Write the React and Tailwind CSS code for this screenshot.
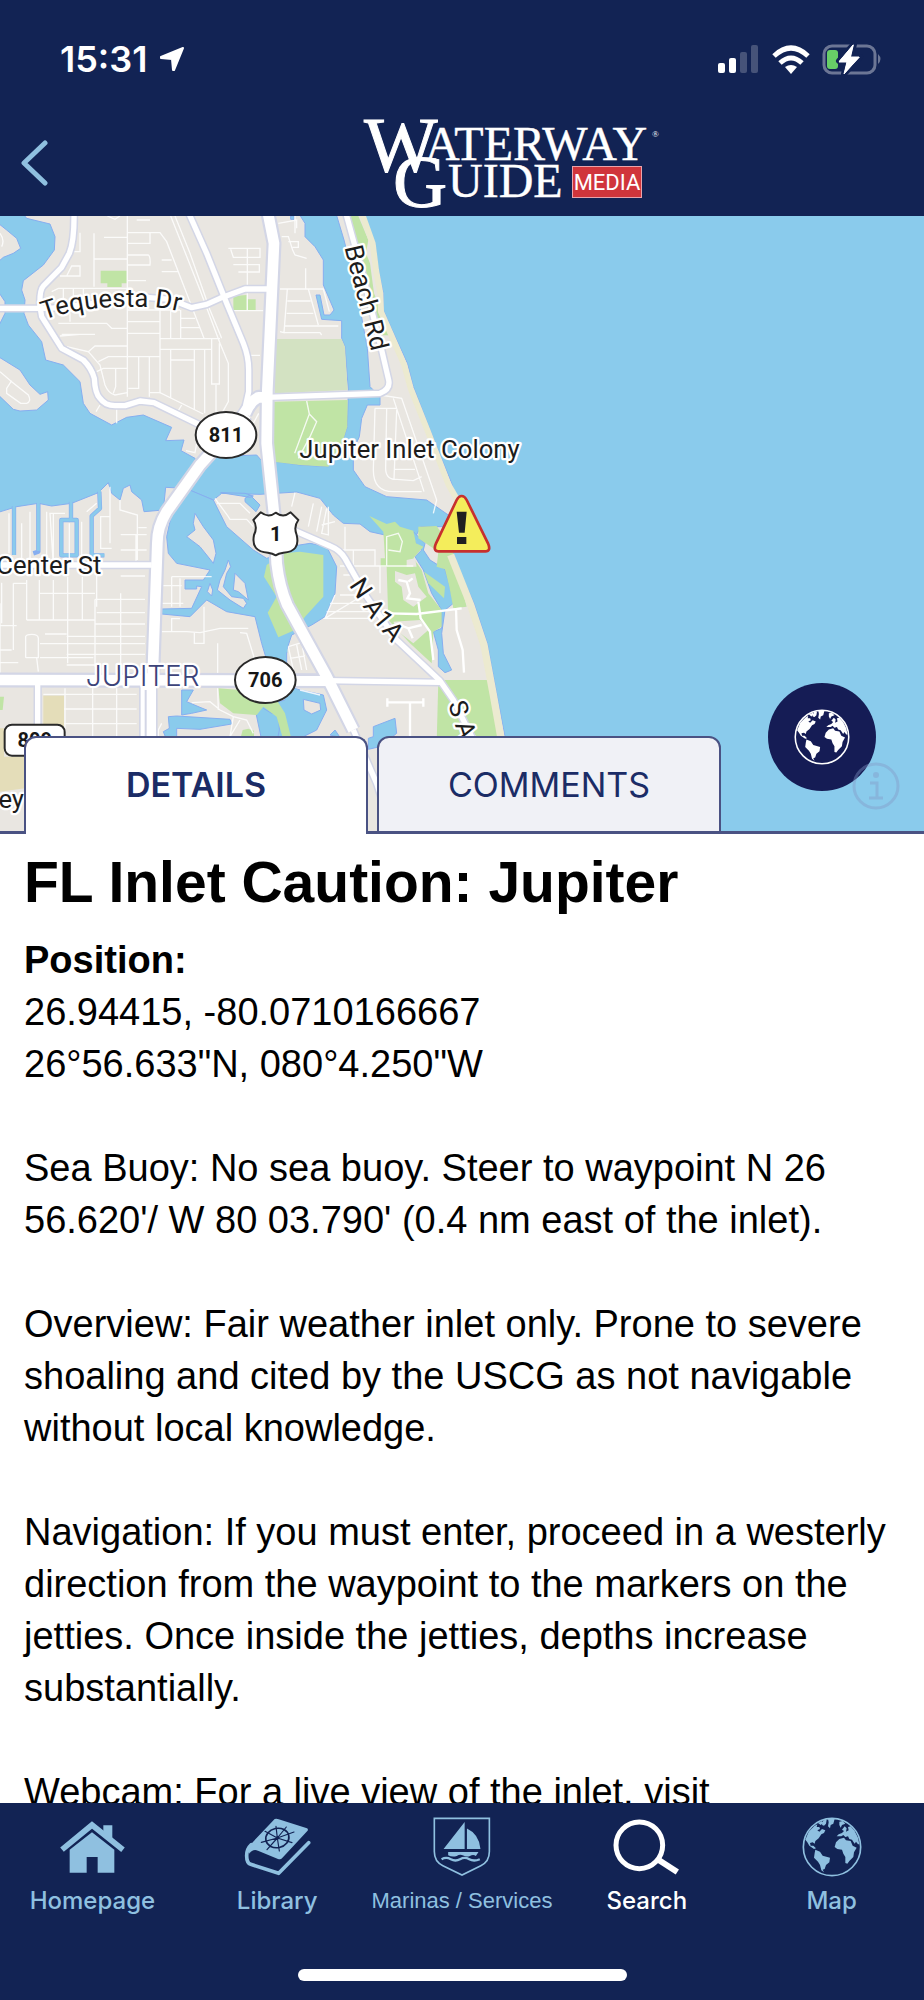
import { useState } from "react";

const roads = {
    us1: "M802 0 L822 100 L802 540 L800 700 L824 930 L830 1060 Q838 1130 862 1185 L980 1400 L1060 1560",
    us1South: "M1060 1560 L1130 1720 L1180 1872",
    r811: "M562 0 L620 130 L680 280 L730 400 Q746 440 746 480 L746 545 L736 590 L690 660",
    r811South: "M740 612 L690 665 L600 765 L500 905 Q472 950 472 1000 L458 1400",
    r811Link: "M800 562 H775 Q750 575 735 612",
    tequesta: "M222 0 Q224 90 208 130 L185 172 L130 228 Q118 240 120 290 L125 320 L185 415 L250 450 Q275 475 283 505 Q285 550 300 565 Q315 587 345 587 L375 587 L420 573 L462 578 L600 645",
    tequestaDr: "M0 295 L150 295 L440 262 L510 268 L575 293 L620 283 L660 265 L735 237 L805 237",
    beach: "M800 562 L1140 550 Q1172 538 1166 510 L1145 420 L1090 200 L1035 0",
    center: "M0 1065 L455 1065",
    indiantown: "M0 1410 L980 1412",
    indiantownEast: "M980 1412 L1320 1417",
    a1a: "M880 960 L990 1008 Q1020 1020 1035 1045 L1100 1160 L1190 1290 L1320 1412 L1360 1470 L1425 1600",
    maplewood: "M113 1410 L113 1872",
};

// thin residential streets
const streets = [
    // north side
    "M382 18 V560 M282 70 V230 M282 147 H382 M382 68 H480 L500 95 L612 385 M382 100 H450 V68 M382 135 H445 Q452 140 450 165 H382",
    "M512 18 L600 240 L660 400 L685 460 V575 L660 620 M525 18 L570 130 L630 300 L665 385 M382 212 H438 M485 185 H535 M485 150 H515 M312 82 H382 M410 30 H450",
    "M240 68 V125 H215 M180 198 H240 V168 H215 L200 198 M155 245 L175 235 H382 M190 235 V290 M220 235 V290 M250 235 V290 M210 310 V335",
    "M382 300 H540 M480 300 V550 M512 300 V385 M542 300 V385 M542 325 H585 M542 353 H600 M480 386 H660 M480 418 H635 M382 335 H480 M382 370 H480",
    "M175 340 H320 L335 355 H382 M185 373 H285 M180 378 L240 373 M382 408 H285 L265 425 L200 410 M295 455 L325 440 H480 M382 475 H310 L290 485",
    "M265 425 L300 465 L315 525 Q325 550 345 555 L382 548 M347 475 V530 L340 550 M416 440 V535 H385 M448 440 V560 M448 548 H480 L610 612 M512 418 V565 M512 450 H583",
    "M583 418 V600 M614 418 V610 M635 386 V522 H658 V400 M648 525 V620 M545 585 L530 610 M350 587 V640 M300 585 L288 605 M322 18 L345 28 L360 18",
    "M685 115 H780 V142 H700 L692 118 M700 164 H778 V186 H715 M742 115 V300 M690 302 H790 M752 436 H780 M776 610 L760 640 M558 722 L585 728 L590 700",
    "M840 237 H970 L988 305 M862 237 L852 368 L840 365 M852 348 H1015 M860 310 H940 M862 273 H932 M925 237 L955 345 M917 175 V235 M852 368 H960 L965 375",
    "M845 80 H865 L878 120 L885 135 L920 145 M865 95 H895 V112 L878 112 M835 40 L890 30 V55 M885 18 V70",
    "M0 485 L35 515 L85 555 Q95 575 80 580 H62 L20 550 V535 L35 512 M0 70 Q15 90 5 110",
    "M920 573 L928 612 L884 730 M928 612 L950 635 L930 680 L895 745",
    // Jupiter Inlet Colony
    "M1140 555 L1205 565 L1310 870 L1300 910 M1180 565 L1272 845 M1125 595 H1190 M1125 595 L1120 780 Q1120 845 1180 845 H1265 M1160 595 L1157 770 Q1155 810 1190 808 L1240 812 L1265 800 M1190 600 L1182 808 M1182 778 H1245",
    // canals district
    "M27 910 V1030 M65 940 V1060 M90 905 V1060 M140 905 V1065 M160 912 V1065 L150 910 H195 M245 935 V1060 M330 830 V1000 M300 920 H330 M302 920 V1015 H335 M260 905 L290 880 M208 940 V1060",
    "M360 870 V900 L412 915 V1050 M440 953 H415 M362 974 H440 M362 1020 H440 M408 974 V1065",
    // west Jupiter grid
    "M5 1118 V1240 M40 1120 V1320 M80 1110 V1230 M118 1110 V1230 M160 1110 V1230 M203 1100 V1360 M247 1100 V1230 M290 1090 V1190 M285 1168 V1370 M362 1150 V1380 M0 1320 H35",
    "M120 1150 H285 M80 1230 H285 M0 1247 H50 M285 1168 H435 M290 1208 H435 M285 1242 H435 M200 1279 H435 M120 1301 H200 M200 1301 H435 M200 1333 H435 M120 1343 H280 M200 1365 H300 M362 1098 H435 M40 1120 H80",
    "M77 1343 V1280 Q78 1273 95 1273 Q115 1273 115 1285 V1343 H77 M110 1343 L115 1385 M135 1272 H200 M0 1358 H55 M485 1325 M0 1180 V1400 M130 1453 H410 M192 1497 H410 M192 1541 H410 M278 1435 V1590 M350 1435 V1590 M195 1435 V1590",
    "M485 1265 H560 L600 1268 L660 1255 H745 M515 1265 V1226 H540 M612 1190 V1265 V1300 H583 V1268 M720 1268 L740 1270 L760 1335 L770 1370 M653 1300 V1400 M485 1127 H545 M515 1100 H635 M515 1100 V1190 M485 1180 H550 M540 1105 V1190",
    "M485 1540 L475 1560 V1590 M575 1478 L630 1475 L660 1500 L700 1520 L740 1530 L760 1570 M653 1435 L655 1500 M700 1520 L690 1580 L720 1530",
    // east of US 1
    "M645 865 L685 920 L690 928 H740 L760 950 M650 880 H720 L750 910 M885 848 L875 890 M940 880 L925 950 M965 890 L950 965 M980 895 L965 970 L985 975 V890 M1005 935 L965 945",
    "M1035 950 V1020 M1025 1020 H1125 V1068 M1060 1020 V1068 M1020 1068 H1240 M1030 1095 H1060 M1140 1070 V1150 M1160 1070 V980 L1195 970 L1207 995 L1200 1025 L1165 1020",
    "M1020 1155 H1090 L975 1225 H1115 M990 1180 H1090 M980 1205 H1110 M1005 1155 L975 1225",
    "M865 1310 L880 1380 M865 1310 L905 1298 L920 1380 M870 1345 L915 1338 M890 1305 L905 1380 M900 1440 L960 1455",
];

const greens = [
    "M302 182 H380 V220 H365 V231 H322 V220 H302 Z",
    "M700 258 L740 255 V300 H700 Z M742 268 H767 V300 H742 Z",
    "M1042 18 H1075 L1105 90 L1098 130 L1110 160 L1122 250 L1142 300 L1170 376 L1148 376 L1080 150 Z",
    "M820 575 L1043 570 L1042 650 L1020 720 L985 770 L900 765 L820 755 Z",
    "M800 1065 L850 1030 L900 1025 L970 1035 V1160 L915 1220 L885 1260 L835 1282 L803 1208 L830 1160 L792 1100 Z",
    "M1108 918 L1160 942 L1185 935 L1200 950 L1240 962 L1248 1000 L1270 1010 L1240 1045 L1265 1080 L1285 1150 L1325 1200 V1250 L1300 1265 L1295 1360 L1230 1300 L1165 1230 L1160 1070 H1142 V1045 H1155 L1150 965 Z",
    "M1255 950 L1310 948 L1345 1000 L1360 1030 L1400 1190 L1360 1195 L1348 1130 L1335 1078 L1310 1070 L1315 1025 L1255 985 Z",
    "M1315 1410 H1465 L1500 1600 H1310 Z",
    "M655 1435 L720 1440 L830 1470 L855 1510 L875 1590 H850 L830 1520 L790 1490 L770 1515 L700 1510 L660 1480 Z",
    "M728 1560 L745 1556 L762 1562 V1590 H720 Z M0 1460 H12 L8 1500 H0 Z M0 1577 L12 1580 V1625 H0 Z",
];

function MapLabel({ children, ...rest }) {
    return (
        <text fontSize="77" fill="#1c1c1c" stroke="#fff" strokeWidth="14" strokeLinejoin="round" paintOrder="stroke" {...rest}>
            {children}
        </text>
    );
}

function MapView() {
    const minor = ["tequesta", "tequestaDr", "beach", "r811", "indiantownEast", "a1a", "center", "maplewood", "us1South"];
    const major = ["us1", "r811South", "r811Link", "indiantown"];
    return (
        <svg viewBox="0 18 2772 1854" className="block w-full h-auto" fontFamily="Roboto, sans-serif" role="img" aria-label="Map of Jupiter Inlet">
            <rect x="0" y="0" width="2772" height="1880" fill="#8acbec" />
            {/* land */}
            <g fill="#e9e6e1" stroke="#86aef0" strokeWidth="3">
                <path d="M60 0 L80 25 L150 42 L165 80 L163 120 L130 165 L70 212 L65 240 L75 270 L72 310 L85 345 L125 395 L137 450 L190 465 L240 515 L250 580 L270 610 L335 645 L380 622 L430 615 L515 652 L497 692 L552 690 L543 722 L585 745 L590 765 L640 740 L770 735 L785 752 L830 755 L900 765 L985 770 L1020 720 L1042 650 L1045 540 L1035 410 L1025 385 V332 L965 328 L948 255 L960 255 L972 315 H990 L1002 300 L970 225 V150 L945 110 L915 80 V40 L890 0 Z" />
                <path d="M-5 40 L20 60 L50 85 L62 115 L40 130 L10 142 L-5 155 Z M-5 245 L15 275 L15 310 L-5 350 Z M-5 440 L60 480 L90 525 L120 553 L143 545 L145 570 L110 600 L60 603 L40 598 L-5 555 Z" />
                <path d="M1005 0 L1032 90 L1070 240 L1102 415 L1110 530 L1140 560 V585 L1102 585 L1085 625 L1078 680 L1060 720 V780 L1095 830 L1160 860 L1280 870 L1345 915 L1385 925 L1355 820 L1290 660 L1240 530 L1222 460 L1172 350 L1150 300 V250 L1133 170 L1125 100 L1080 0 Z" />
                <path d="M-5 907 L50 890 L115 880 L155 888 L215 880 L295 848 L325 818 L335 850 L360 870 L370 835 L390 825 L395 845 L425 870 L432 905 L490 900 L497 832 L555 835 L640 870 L665 850 L780 853 L890 846 L960 865 L1000 915 L1030 940 L1080 942 L1110 965 L1155 975 L1230 962 L1242 990 L1262 950 L1340 950 L1360 1040 L1422 1180 L1462 1300 L1490 1450 L1515 1580 L1540 1880 H-5 Z" />
            </g>
            <g fill="#8acbec" stroke="#86aef0" strokeWidth="3">
                <path d="M550 832 L640 870 L680 950 L760 1020 L800 1045 L850 1030 L880 1008 L930 1000 L980 1010 L1010 1070 L1005 1150 L975 1220 L935 1245 L875 1275 L860 1320 V1400 L870 1430 L900 1440 L970 1455 L980 1500 L950 1560 L890 1590 H785 L768 1510 L790 1488 L855 1470 L850 1400 L800 1350 L785 1300 L765 1220 L680 1205 L620 1170 L570 1220 L485 1212 V1197 L575 1195 L605 1130 L590 1128 V1137 H555 V1110 L610 1110 L630 1080 L530 1060 L505 1030 L500 980 L512 925 L520 870 Z" />
                <path d="M1240 965 L1275 1000 L1270 1020 L1290 1050 L1335 1078 L1350 1130 L1360 1180 L1335 1200 L1325 1270 L1330 1330 L1355 1380 L1335 1388 L1315 1370 L1315 1320 L1300 1265 L1325 1255 V1200 L1295 1150 L1270 1080 L1245 1040 L1265 1020 L1240 990 Z" />
                <path d="M1120 1550 L1185 1525 L1190 1570 L1140 1610 L1105 1618 V1585 L1120 1580 Z M990 1575 L1005 1560 L1020 1582 Z M545 1440 H580 L560 1475 L600 1492 L620 1500 L575 1510 L545 1515 Z M505 1520 L530 1518 L690 1528 L695 1542 L600 1558 L530 1555 V1590 H500 L490 1565 L508 1555 Z M735 865 L750 855 L780 885 L768 905 L735 875 Z M872 18 H882 V28 H872 Z M57 1708 L75 1700 V1725 L57 1722 Z M1390 1490 L1410 1500 L1420 1545 L1395 1535 Z M662 848 L735 850 L760 858 L750 862 Z" />
                <path d="M838 1262 L870 1255 L880 1260 L862 1290 V1330 L838 1300 Z" stroke="none" />
            </g>
            {/* islets */}
            <g fill="#e9e6e1" stroke="#86aef0" strokeWidth="3">
                <path d="M585 910 L610 950 L640 990 L648 1030 L640 1060 L600 1010 L560 980 L585 960 L580 940 Z M685 1050 L692 1070 L680 1090 L670 1130 L695 1160 L730 1165 L740 1180 L730 1195 L690 1170 L652 1140 L660 1110 L675 1080 Z M705 1090 L735 1120 L745 1170 L715 1145 L700 1140 Z M630 1120 L638 1140 L635 1158 L622 1145 Z M910 1468 L960 1480 L962 1500 L935 1512 L912 1500 Z" />
                <path d="M790 1495 L815 1510 L836 1512 L838 1560 L832 1590" fill="none" />
            </g>
            {/* canals */}
            <g fill="none" stroke="#86aef0" strokeWidth="13" strokeLinejoin="round">
                <path d="M42 888 V1035 M115 880 V1025 L100 1030 M213 875 V930 M184 930 L184 1036 H230 V930 Z M298 845 L300 895 L275 918 V1036 H313" />
                <path d="M42 880 V1035 M115 875 V1022 M213 870 V930 M184 930 L184 1036 H230 V930 Z M298 840 L300 895 L275 918 V1036 H313" stroke="#8acbec" strokeWidth="9" />
            </g>
            <path d="M825 387 H1025 L1035 410 L1043 540 L825 550 Z" fill="#d3e2c2" />
            <g fill="#c0e4a5">
                {greens.map((d) => <path key={d} d={d} />)}
            </g>
            <path d="M1272 1085 L1335 1130 L1332 1165 L1285 1120 Z" fill="#c0e4a5" />
            <g fill="#e9e6e1">
                <path d="M1185 1083 L1220 1095 L1245 1090 L1255 1130 L1280 1160 L1240 1190 L1210 1170 L1205 1130 L1185 1115 Z M1180 1235 L1260 1230 L1285 1260 L1240 1300 L1195 1265 Z M1220 1050 L1245 1045 L1250 1070 H1220 Z" />
            </g>
            <path d="M130 1457 H192 V1590 H130 Z M0 1555 H12 V1640 H75 V1735 L0 1745 Z" fill="#e4ddb9" />
            {/* beach */}
            <path d="M1082 0 L1118 100 L1128 180 L1141 250 L1143 305 L1213 465 L1232 535 L1282 660 L1346 825 L1372 870" fill="none" stroke="#ecead0" strokeWidth="18" />
            <path d="M1352 1035 L1412 1185 L1452 1305 L1480 1455 L1504 1590" fill="none" stroke="#ecead0" strokeWidth="22" />
            <g fill="none" stroke="#fff" strokeWidth="4" opacity=".85">
                {streets.map((d) => <path key={d} d={d} />)}
            </g>
            <g fill="none" stroke="#fff" strokeWidth="7">
                <path d="M1160 1210 L1250 1212 L1385 1195 M1255 1175 L1262 1225 L1290 1265 L1300 1350 M1368 1195 L1370 1260 L1388 1320 L1392 1388 M1195 1110 L1220 1115 L1230 1150 L1222 1165 L1262 1170 M1225 1115 L1238 1105 M1200 1245 L1225 1255 L1265 1245 M1225 1255 L1238 1285 M1162 1477 H1270 M1162 1465 V1490 M1270 1465 V1490 M1230 1477 V1590" />
            </g>
            {/* roads: casing first, white on top */}
            <g fill="none" strokeLinejoin="round">
                {minor.map((k) => <path key={k} d={roads[k]} stroke="#d3d6e6" strokeWidth="25" />)}
                {major.map((k) => <path key={k} d={roads[k]} stroke="#d3d6e6" strokeWidth="45" />)}
                <path d="M445 1390 V1872" stroke="#d3d6e6" strokeWidth="56" />
                {minor.map((k) => <path key={k} d={roads[k]} stroke="#fff" strokeWidth="16" />)}
                {major.map((k) => <path key={k} d={roads[k]} stroke="#fff" strokeWidth="32" />)}
                <path d="M445 1390 V1872" stroke="#fff" strokeWidth="46" />
                <path d="M437 1440 V1872" stroke="#d3d6e6" strokeWidth="6" />
            </g>
            {/* labels */}
            <defs>
                <path id="tequesta-path" d="M132 330 C200 305 290 290 380 290 S500 292 580 315" />
                <path id="beach-path" d="M1034 112 C1050 190 1088 310 1122 460" />
                <path id="a1a-path" d="M1046 1126 L1105 1215 L1200 1330" />
                <path id="sa-path" d="M1344 1482 L1376 1580 L1400 1660" />
            </defs>
            <MapLabel><textPath href="#tequesta-path">Tequesta Dr</textPath></MapLabel>
            <MapLabel><textPath href="#beach-path">Beach Rd</textPath></MapLabel>
            <MapLabel><textPath href="#a1a-path">N A1A</textPath></MapLabel>
            <MapLabel><textPath href="#sa-path">S A1A</textPath></MapLabel>
            <MapLabel x="898" y="745">Jupiter Inlet Colony</MapLabel>
            <MapLabel x="304" y="1092" textAnchor="end">Center St</MapLabel>
            <MapLabel x="72" y="1795" textAnchor="end">ey</MapLabel>
            <MapLabel x="428" y="1429" textAnchor="middle" fontSize="84" fontWeight="300" fontFamily="Inter, sans-serif" fill="#3c4379">JUPITER</MapLabel>
            {/* route shields */}
            <g fill="#fff" stroke="#2a2a2a" strokeWidth="6">
                <ellipse cx="678" cy="675" rx="91" ry="69" />
                <ellipse cx="796" cy="1410" rx="91" ry="69" />
                <path d="M782 907 Q805 925 827 908 Q850 925 872 907 L895 930 Q880 950 890 975 Q902 1025 850 1028 Q835 1030 827 1036 Q818 1030 804 1028 Q752 1025 762 975 Q774 950 760 930 Z" strokeLinejoin="round" />
                <rect x="14" y="1544" width="180" height="93" rx="22" />
            </g>
            <g fill="#161616" fontWeight="700" fontSize="60" textAnchor="middle">
                <text x="678" y="696">811</text>
                <text x="796" y="1431">706</text>
                <text x="827" y="993">1</text>
                <text x="104" y="1611">809</text>
            </g>
            {/* inlet caution marker */}
            <path d="M1385 858 Q1394 858 1400 870 L1464 1000 Q1474 1024 1456 1024 H1316 Q1298 1024 1308 1000 L1370 870 Q1376 858 1385 858 Z" fill="#f4ed5b" stroke="#c7302e" strokeWidth="8" />
            <path d="M1370 905 H1400 L1394 968 H1377 Z M1371 981 H1399 V1002 H1371 Z" fill="#202020" />
        </svg>
    );
}

function Logo() {
    return (
        <svg viewBox="362 115 300 96" className="w-[300px] h-24 overflow-visible" fill="#fff" fontFamily="'Liberation Serif', serif" role="img" aria-label="Waterway Guide Media">
            <text x="365" y="171" fontSize="78" stroke="#fff">W</text>
            <text x="426" y="160" fontSize="48" stroke="#fff" strokeWidth=".4">ATERWAY</text>
            <text x="394" y="207" fontSize="75" stroke="#fff">G</text>
            <text x="449" y="197" fontSize="48" stroke="#fff" strokeWidth=".4">UIDE</text>
            <text x="653" y="137" fontSize="9">®</text>
            <rect x="573.5" y="166.5" width="69" height="31" fill="#d0353b" stroke="#e9a3ab" />
            <text x="608" y="190" fontSize="22" fontFamily="Roboto, sans-serif" textAnchor="middle">MEDIA</text>
        </svg>
    );
}

function Globe({ className }) {
    return (
        <svg viewBox="0 0 180 180" className={className} fill="currentColor">
            <circle cx="90" cy="90" r="86" fill="none" stroke="currentColor" strokeWidth="5" />
            <path d="M10 68 L20 44 L37 27 L46 22 L44 30 L52 30 L54 36 L46 40 L52 44 L60 36 L70 40 L66 48 L58 52 L50 64 L40 72 L38 80 L32 76 L24 78 L26 86 L34 86 L42 94 L36 96 L22 86 L16 76 Z" />
            <path d="M48 18 L60 12 L64 18 L56 24 Z M64 10 L74 8 L72 20 L66 26 L60 24 Z" />
            <path d="M78 5 L98 5 L94 20 L86 24 L84 34 L78 28 L80 16 Z" />
            <path d="M40 98 L54 104 L62 116 L84 122 L82 136 L72 144 L68 156 L62 158 L66 166 L58 160 L54 144 L48 134 L36 122 L38 108 Z" />
            <path d="M102 76 L112 66 L126 62 L132 70 L146 72 L152 86 L164 92 L156 106 L154 120 L142 132 L136 140 L130 138 L130 120 L124 110 L120 98 L106 96 L98 90 Z" />
            <path d="M104 58 L110 52 L120 48 L126 42 L120 38 L128 28 L134 34 L132 44 L140 40 L138 30 L146 28 L158 42 L168 62 L172 82 L168 82 L162 74 L158 80 L150 68 L142 66 L138 58 L130 60 L124 54 L118 58 Z" />
            <path d="M112 14 L122 12 L130 20 L120 24 L116 32 L112 24 Z" />
        </svg>
    );
}

function HouseIcon() {
    return (
        <svg viewBox="178 112 196 180" className="h-[60px]" fill="currentColor">
            <path d="M184 210 L274 136 L367 210" fill="none" stroke="currentColor" strokeWidth="17" />
            <path d="M308 137 H335 V178 L308 157 Z" />
            <path d="M207 210 L274 158 L341 210 V279 H291 V232 H258 V279 H207 Z" />
        </svg>
    );
}

function BookIcon() {
    return (
        <svg viewBox="728 112 202 180" className="h-[60px]" fill="currentColor">
            <path d="M820 118 Q826 116 832 119 L917 146 Q922 149 918 154 L842 236 Q838 241 830 238 L770 213 Q754 207 744 222 Q740 205 750 192 Z" />
            <path d="M750 195 Q736 208 736 228 Q736 250 748 254 L832 281 L922 189" fill="none" stroke="currentColor" strokeWidth="11" strokeLinejoin="round" strokeLinecap="round" />
            <g fill="none" stroke="#122354" strokeWidth="5" strokeLinecap="round">
                <ellipse cx="828" cy="175" rx="35" ry="29" transform="rotate(-12 828 175)" />
                <path strokeWidth="3.5" d="M828 175 L824 140 M828 175 L855 142 M828 175 L878 157 M828 175 L872 189 M828 175 L834 214 M828 175 L797 210 M828 175 L780 188 M828 175 L791 155" />
            </g>
            <circle cx="828" cy="175" r="5" fill="#122354" />
        </svg>
    );
}

function SailIcon() {
    return (
        <svg viewBox="0 0 176 182" className="h-[60px]" fill="currentColor">
            <path d="M4 4 H171 V105 C171 125 162 140 145 148 L88 176 L30 148 C13 140 4 125 4 105 Z" fill="none" stroke="currentColor" strokeWidth="5" />
            <path d="M32 97 L96 15 V97 Z M103 35 Q140 52 144 97 H103 Z M46 106 H138 L130 118 Q122 112 112 118 Q102 122 92 117 Q82 112 72 118 Q58 122 46 116 Z" />
            <path d="M26 128 q14 -8 28 0 t28 0 t28 0 t32 0" fill="none" stroke="currentColor" strokeWidth="7" />
        </svg>
    );
}

function SearchIcon() {
    return (
        <svg viewBox="452 112 200 180" className="h-[60px]" fill="none" stroke="currentColor">
            <circle cx="531" cy="197" r="70" strokeWidth="15" />
            <path d="M588 240 L645 277" strokeWidth="18" />
        </svg>
    );
}

const tabs = [
    { label: "Homepage", icon: <HouseIcon /> },
    { label: "Library", icon: <BookIcon /> },
    { label: "Marinas / Services", icon: <SailIcon />, small: true },
    { label: "Search", icon: <SearchIcon />, active: true },
    { label: "Map", icon: <Globe className="h-[60px]" /> },
];

function StatusBar() {
    return (
        <div className="h-[110px] pt-2 pl-[60px] pr-[42px] flex items-center justify-between text-white">
            <div className="flex items-center gap-3">
                <span className="text-[36px] leading-none font-semibold">15:31</span>
                <svg viewBox="0 0 26 26" className="w-[26px]" fill="#fff" stroke="#fff" strokeWidth="2" strokeLinejoin="round"><path d="M24 2 L15 24 H14 L13 13 L2 12 V11 Z" /></svg>
            </div>
            <div className="flex items-center gap-3">
                <svg viewBox="0 0 42 28" className="w-[42px]" fill="#fff">
                    <rect x="0" y="18" width="7" height="10" rx="2" />
                    <rect x="11" y="13" width="7" height="15" rx="2" />
                    <rect x="22" y="7" width="7" height="21" rx="2" opacity=".22" />
                    <rect x="33" y="0" width="7" height="28" rx="2" opacity=".22" />
                </svg>
                <svg viewBox="0 0 38 29" className="w-[38px]" fill="none" stroke="#fff" strokeWidth="5">
                    <path d="M2 11 Q19 -5 36 11" />
                    <path d="M8 18 Q19 8 30 18" />
                    <path d="M19 29 L13 22 Q19 18 25 22 Z" fill="#fff" stroke="none" />
                </svg>
                <svg viewBox="0 0 60 32" className="w-[60px]" fill="none">
                    <rect x="2" y="3" width="51" height="27" rx="8" stroke="#6c7695" strokeWidth="3" />
                    <path d="M56 11 Q61 16 56 21 Z" fill="#6c7695" />
                    <rect x="5" y="7" width="11" height="19" rx="3" fill="#67ce67" />
                    <path d="M32 1 L17 18 H25 L22 31 L38 14 H29 Z" fill="#fff" stroke="#122354" strokeWidth="6" strokeLinejoin="round" paintOrder="stroke" />
                    <path d="M31 2 L17 19 H25 L22 31 L37 14 H28 Z" fill="#fff" stroke="#fff" strokeLinejoin="round" />
                </svg>
            </div>
        </div>
    );
}

function App() {
    const [tab, setTab] = useState("details");

    return (
        <div className="h-screen flex flex-col bg-white font-[Inter,sans-serif]">
            <header className="bg-[#122354] shrink-0">
                <StatusBar />
                <div className="h-[106px] flex items-center">
                    <button type="button" aria-label="Back" className="w-[98px] shrink-0 pl-5 text-[#8fc0e0]">
                        <svg viewBox="0 0 28 46" className="h-[46px]" fill="none" stroke="currentColor" strokeWidth="5" strokeLinecap="round" strokeLinejoin="round"><path d="M25 3 L4 23 L25 43" /></svg>
                    </button>
                    <div className="flex-1 flex justify-center">
                        <Logo />
                    </div>
                </div>
            </header>

            <section className="relative shrink-0">
                <MapView />
                <button type="button" aria-label="Map style" className="absolute right-12 bottom-[43px] size-[108px] rounded-full bg-[#151c55] text-white flex items-center justify-center">
                    <Globe className="size-[56px]" />
                </button>
                <button type="button" aria-label="Map info" className="absolute right-6 bottom-6 size-12 text-[#8498c6] opacity-40">
                    <svg viewBox="0 0 48 48" fill="none" stroke="currentColor" strokeWidth="3">
                        <circle cx="24" cy="24" r="22" />
                        <circle cx="24" cy="13" r="3" fill="currentColor" stroke="none" />
                        <path d="M18 21 H25 V36 M17 36 H31" />
                    </svg>
                </button>
                <div className="absolute inset-x-0 bottom-0 flex text-[34px] text-[#1b2c66]" role="tablist">
                    <div className="w-6 border-b-3 border-[#4a5283]"></div>
                    <button type="button" role="tab" aria-selected={tab === "details"} onClick={() => setTab("details")} className="w-[344px] h-[98px] pb-1 rounded-t-xl border-2 border-b-0 border-[#4a5283] bg-white font-semibold">DETAILS</button>
                    <div className="w-[9px] border-b-3 border-[#4a5283]"></div>
                    <button type="button" role="tab" aria-selected={tab === "comments"} onClick={() => setTab("comments")} className="w-[344px] h-[98px] rounded-t-xl border-2 border-b-3 border-[#4a5283] bg-[#f0f1f6]">COMMENTS</button>
                    <div className="flex-1 border-b-3 border-[#4a5283] pointer-events-none"></div>
                </div>
            </section>

            <main className="flex-1 min-h-0 overflow-y-auto [scrollbar-width:none] px-6 pt-4 text-black font-['Liberation_Sans',Arial,sans-serif] text-[38px] leading-[52px]">
                <h1 className="text-[57px] leading-[64px] font-bold mb-5">FL Inlet Caution: Jupiter</h1>
                <h2 className="font-bold">Position:</h2>
                <p>26.94415, -80.0710166667</p>
                <p className="mb-[52px]">26°56.633"N, 080°4.250"W</p>
                <p className="mb-[52px]">Sea Buoy: No sea buoy. Steer to waypoint N 26 56.620'/ W 80 03.790' (0.4 nm east of the inlet).</p>
                <p className="mb-[52px]">Overview: Fair weather inlet only. Prone to severe shoaling and cited by the USCG as not navigable without local knowledge.</p>
                <p className="mb-[52px]">Navigation: If you must enter, proceed in a westerly direction from the waypoint to the markers on the jetties. Once inside the jetties, depths increase substantially.</p>
                <p>Webcam: For a live view of the inlet, visit</p>
            </main>

            <nav className="h-[197px] shrink-0 bg-[#122354] pt-[14px] pb-[19px] flex flex-col justify-between items-center">
                <div className="w-full grid grid-cols-5">
                    {tabs.map((t) => (
                        <a key={t.label} href="#" className={t.active ? "flex flex-col items-center gap-2 text-white" : "flex flex-col items-center gap-2 text-[#8fc0e0]"}>
                            {t.icon}
                            <span className={t.small ? "text-[22px] leading-8 font-['Liberation_Sans',Arial,sans-serif] whitespace-nowrap" : "text-[24px] leading-8 font-medium"}>{t.label}</span>
                        </a>
                    ))}
                </div>
                <div className="w-[329px] h-3 rounded-full bg-white"></div>
            </nav>
        </div>
    );
}

export default App;
